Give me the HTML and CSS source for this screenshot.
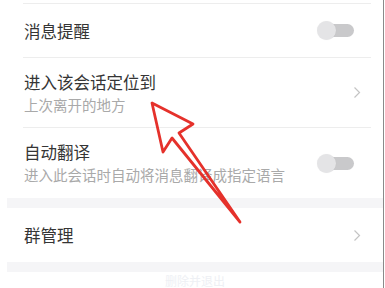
FILE: index.html
```html
<!DOCTYPE html>
<html lang="zh-CN">
<head>
    <meta charset="UTF-8">
    <meta name="viewport" content="width=device-width, initial-scale=1.0">
    <title>聊天设置</title>
    <link rel="stylesheet" href="styles.css">
</head>
<body>
    <div class="screen">
        <div class="group">
            <div class="cell cell-top"><div class="cell-inner"></div></div>
            <div class="cell">
                <div class="cell-inner">
                    <div class="cell-text">
                        <p class="cell-title">消息提醒</p>
                    </div>
                    <div class="switch"><span class="knob"></span></div>
                </div>
            </div>
            <div class="cell">
                <div class="cell-inner tall">
                    <div class="cell-text">
                        <p class="cell-title">进入该会话定位到</p>
                        <p class="cell-desc">上次离开的地方</p>
                    </div>
                    <span class="chevron">
                        <svg width="8" height="13" viewBox="0 0 8 13"><path d="M1.5 1.5 L6.5 6.5 L1.5 11.5" fill="none" stroke="#c4c4c4" stroke-width="1.2"/></svg>
                    </span>
                </div>
            </div>
            <div class="cell">
                <div class="cell-inner tall last">
                    <div class="cell-text">
                        <p class="cell-title">自动翻译</p>
                        <p class="cell-desc">进入此会话时自动将消息翻译成指定语言</p>
                    </div>
                    <div class="switch"><span class="knob"></span></div>
                </div>
            </div>
        </div>
        <div class="gap"></div>
        <div class="group">
            <div class="cell">
                <div class="cell-inner last">
                    <div class="cell-text">
                        <p class="cell-title">群管理</p>
                    </div>
                    <span class="chevron">
                        <svg width="8" height="13" viewBox="0 0 8 13"><path d="M1.5 1.5 L6.5 6.5 L1.5 11.5" fill="none" stroke="#c4c4c4" stroke-width="1.2"/></svg>
                    </span>
                </div>
            </div>
        </div>
        <div class="gap"></div>
        <div class="danger">删除并退出</div>

        <!-- annotation arrow drawn over the list -->
        <svg class="arrow" width="385" height="288" viewBox="0 0 385 288">
            <polygon points="152,103 193,124 179,133 240,222 172,138 163,152" fill="none" stroke="#e5312b" stroke-width="2.8" stroke-linejoin="round"/>
        </svg>
    </div>
</body>
</html>
```

FILE: styles.css
```css
* {
    box-sizing: border-box;
    margin: 0;
    padding: 0;
}

body {
    background: #fff;
    font-family: "Noto Sans CJK SC", "Noto Sans", sans-serif;
    width: 385px;
    height: 288px;
    overflow: hidden;
}

.screen {
    position: relative;
    width: 377px;
    height: 288px;
    margin-left: 7px;
    border-right: 1px solid #8a8a8a;
    overflow: hidden;
}

.group {
    background: #fff;
}

.cell {
    margin-left: -7px;
    padding-left: 23px;
}

.cell-inner {
    display: flex;
    align-items: center;
    justify-content: space-between;
    height: 54px;
    margin-right: 12px;
    border-bottom: 1px solid #ededed;
}

.cell-top .cell-inner {
    height: 4px;
}

.cell-inner.tall {
    height: 70px;
}

.cell-inner.last {
    border-bottom: none;
}

.cell-text {
    display: flex;
    flex-direction: column;
    padding-left: 1px;
}

.cell-title {
    font-size: 16.5px;
    line-height: 22px;
    color: #353535;
}

.cell-desc {
    font-size: 14.5px;
    line-height: 20px;
    margin-top: 2px;
    color: #a9a9a9;
}

.switch {
    position: relative;
    width: 37px;
    height: 19px;
    margin-right: 17px;
}

.switch::before {
    content: "";
    position: absolute;
    left: 4px;
    right: 0;
    top: 3px;
    height: 13px;
    border-radius: 7px;
    background: #c9c9cb;
}

.knob {
    position: absolute;
    left: 0;
    top: 0;
    width: 19px;
    height: 19px;
    border-radius: 50%;
    background: #e4e4e6;
    box-shadow: 0 0 1px rgba(0, 0, 0, 0.08);
}

.chevron {
    display: flex;
    margin-right: 10px;
}

.gap {
    height: 10px;
    background: #f5f5f7;
}

.danger {
    text-align: center;
    font-size: 12px;
    line-height: 16px;
    padding-top: 1px;
    color: #eef0f4;
}

.arrow {
    position: absolute;
    left: -7px;
    top: 0;
    pointer-events: none;
}
```
